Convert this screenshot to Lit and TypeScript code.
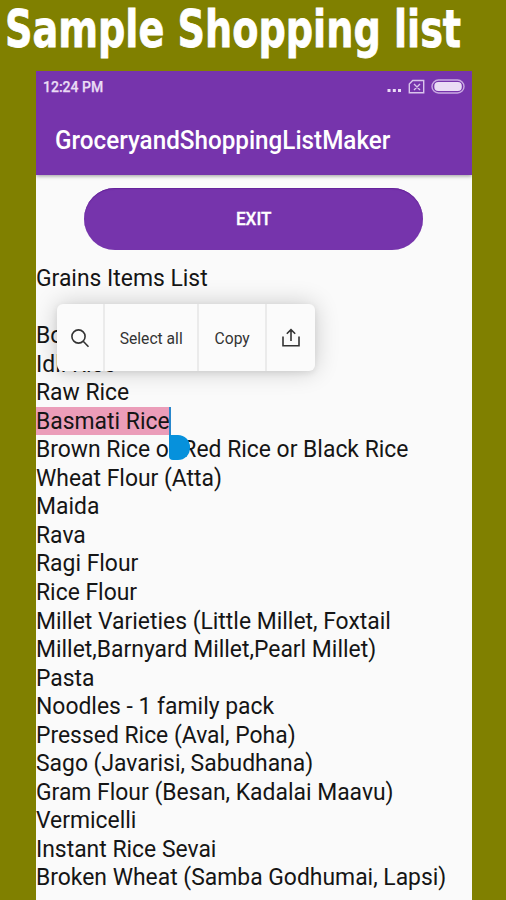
import { LitElement, html, css } from "lit";
import { customElement } from "lit/decorators.js";

const ITEMS = [
  "Grains Items List", "", "Boiled Rice", "Idli Rice", "Raw Rice", "Basmati Rice",
  "Brown Rice or Red Rice or Black Rice", "Wheat Flour (Atta)", "Maida", "Rava",
  "Ragi Flour", "Rice Flour", "Millet Varieties (Little Millet, Foxtail",
  "Millet,Barnyard Millet,Pearl Millet)", "Pasta", "Noodles - 1 family pack",
  "Pressed Rice (Aval, Poha)", "Sago (Javarisi, Sabudhana)",
  "Gram Flour (Besan, Kadalai Maavu)", "Vermicelli", "Instant Rice Sevai",
  "Broken Wheat (Samba Godhumai, Lapsi)",
];
const SELECTED = "Basmati Rice";

@customElement("app-root")
export class AppRoot extends LitElement {
  static styles = css`
    :host { display: block; height: 900px; overflow: hidden; background: #808000; font-family: Roboto, sans-serif; }
    * { box-sizing: border-box; }
    .fit { display: inline-block; white-space: pre; transform-origin: 0 50%; }
    .heading { height: 71px; padding: 1px 0 0 5px; color: #fff; font: bold 52px/57px "DejaVu Sans", sans-serif; white-space: nowrap; }
    .heading .fit { transform: scaleX(.734); -webkit-text-stroke: .8px #fff; }
    .phone { width: 436px; height: 829px; margin-left: 36px; background: #fafafa; position: relative; overflow: hidden; }
    .top { height: 104px; background: #7634ac; box-shadow: 0 1px 4px rgba(0,0,0,.4); }
    .status { height: 32px; padding: 0 7px; display: flex; align-items: center; justify-content: space-between; color: #eadcf5; font-size: 14px; font-weight: 500; }
    .status .fit { transform: scaleX(1); -webkit-text-stroke: .25px #eadcf5; }
    .icons { display: block; }
    .appbar { height: 72px; padding: 1px 0 0 19px; line-height: 73px; color: #fff; font-size: 26px; font-weight: 500; }
    .appbar .fit { transform: scaleX(.932); }
    .exit { display: block; width: 339px; height: 62px; margin: 13px 0 0 48px; padding: 0; border: 0; border-radius: 31px; background: #7634ac; box-shadow: inset 0 1px 1px #652299; color: #fff; font: 500 18px/62px Roboto, sans-serif; text-align: center; }
    .exit .fit { transform: scaleX(.95); transform-origin: 50% 50%; -webkit-text-stroke: .3px #fff; }
    .list { margin-top: 14px; color: #151515; font-size: 23.5px; }
    .row { height: 28.55px; line-height: 28.55px; white-space: nowrap; position: relative; }
    .row .fit { transform: scaleX(.974); vertical-align: top; }
    .selected { width: 135px; background: #eb9db9; border-right: 2px solid #2887cc; }
    .handle { position: absolute; left: 133px; top: 28px; z-index: 1; width: 21px; height: 25px; border-radius: 0 12px 12px 4px; background: #0691dc; }
    .menu { position: absolute; left: 21px; top: 233px; z-index: 2; width: 258px; height: 67px; display: grid; grid-template-columns: 48px 94px 68px 48px; border-radius: 6px; background: #fbfbfb; box-shadow: 0 0 24px rgba(0,0,0,.2), 0 2px 6px rgba(0,0,0,.08); color: #333; font-size: 17px; }
    .cell { display: flex; align-items: center; justify-content: center; border-right: 2px solid #ebebeb; white-space: nowrap; }
    .cell:last-child { border-right: 0; }
    .cell .fit { transform: scaleX(.92); transform-origin: 50% 50%; }
  `;

  render() {
    return html`
      <div class="heading"><span class="fit">Sample Shopping list</span></div>
      <main class="phone">
        <header class="top">
          <div class="status">
            <span class="fit">12:24 PM</span>
            <svg class="icons" width="78" height="18" viewBox="0 0 78 18">
              <g fill="#eadcf5"><rect x="0.5" y="11" width="3" height="3"/><rect x="5.8" y="11" width="3" height="3"/><rect x="11" y="11" width="3" height="3"/></g>
              <path d="M25.7 2.5h11v12.3H22.3V6zM27 6l6 6M33 6l-6 6" fill="none" stroke="#d9c4ec" stroke-width="1.4"/>
              <rect x="45" y="2" width="32" height="13" rx="6.5" fill="none" stroke="#c9a9e2" stroke-width="1.4"/>
              <rect x="47.3" y="4" width="27.5" height="9" rx="4" fill="#eadcf5"/>
            </svg>
          </div>
          <div class="appbar"><span class="fit">GroceryandShoppingListMaker</span></div>
        </header>
        <button class="exit"><span class="fit">EXIT</span></button>
        <div class="list">
          ${ITEMS.map((t) => html`<div class="row ${t === SELECTED ? "selected" : ""}">
            <span class="fit">${t}</span>${t === SELECTED ? html`<i class="handle"></i>` : ""}
          </div>`)}
        </div>
        <nav class="menu">
          <div class="cell">
            <svg width="20" height="20" viewBox="0 0 20 20" fill="none" stroke="#333" stroke-width="1.6"><circle cx="8.5" cy="8.5" r="6.6"/><path d="M13.2 13.2l5.3 5.5"/></svg>
          </div>
          <div class="cell"><span class="fit">Select all</span></div>
          <div class="cell"><span class="fit">Copy</span></div>
          <div class="cell">
            <svg width="20" height="20" viewBox="0 0 20 20" fill="none" stroke="#333" stroke-width="1.6"><path d="M2 8.5v9.2h16V8.5M10 13V2M5.8 5.7L10 1.6l4.2 4.1"/></svg>
          </div>
        </nav>
      </main>`;
  }
}
